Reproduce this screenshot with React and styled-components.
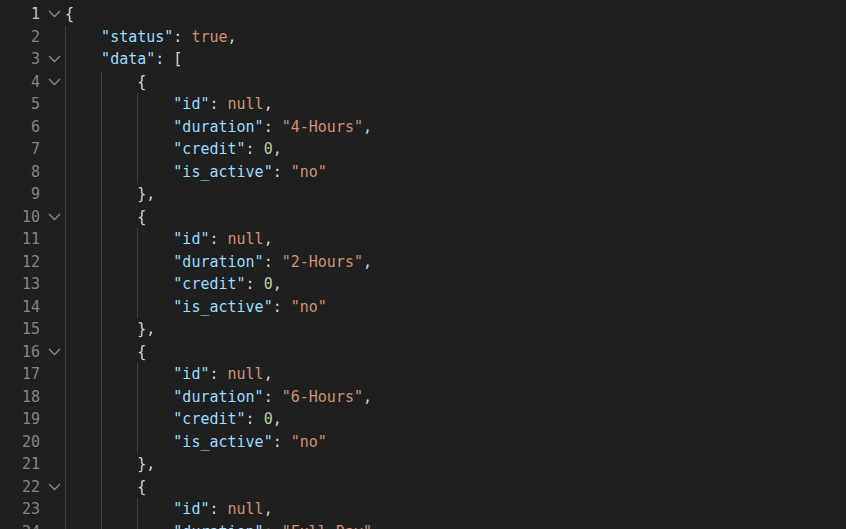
import styled, { createGlobalStyle } from 'styled-components';

const GlobalStyle = createGlobalStyle`
  html, body {
    margin: 0;
    background: #1f1f1f;
  }
`;

const Editor = styled.div`
  height: 100vh;
  overflow: hidden;
  padding-top: 3px;
  box-sizing: border-box;
  background: #1f1f1f;
  font-family: 'DejaVu Sans Mono', 'Liberation Mono', monospace;
  font-size: 15px;
`;

const Row = styled.div`
  display: flex;
  height: 22.5px;
  line-height: 22.5px;
`;

const LineNo = styled.div`
  width: 40px;
  flex-shrink: 0;
  text-align: right;
  color: ${(p) => (p.$active ? '#c6c6c6' : '#858585')};
`;

const Fold = styled.div`
  width: 25px;
  flex-shrink: 0;
  display: flex;
  align-items: center;
  padding-left: 8px;
  box-sizing: border-box;
`;

const Code = styled.div`
  display: flex;
  white-space: pre;
  color: #d4d4d4;
`;

const Indent = styled.span`
  display: inline-block;
  width: 4ch;
  height: 100%;
  box-sizing: border-box;
  border-left: 1px solid #404040;
`;

const colors = {
  key: '#9cdcfe',
  str: '#ce9178',
  kw: '#ce9178',
  num: '#b5cea8',
  punc: '#d4d4d4',
  brace: '#d4d4d4',
};

const Token = styled.span`
  color: ${(p) => colors[p.$kind]};
`;

const Chevron = () => (
  <svg width="13" height="8" viewBox="0 0 13 8">
    <polyline points="1,1 6.5,6.5 12,1" fill="none" stroke="#8b8b8b" strokeWidth="1.3" />
  </svg>
);

const prop = (indent, key, kind, value, comma = true) => ({
  indent,
  tokens: [
    ['key', `"${key}"`],
    ['punc', ': '],
    [kind, value],
    ...(comma ? [['punc', ',']] : []),
  ],
});

const item = (duration, last) => [
  { indent: 2, fold: true, tokens: [['brace', '{']] },
  prop(3, 'id', 'kw', 'null'),
  prop(3, 'duration', 'str', `"${duration}"`),
  prop(3, 'credit', 'num', '0'),
  prop(3, 'is_active', 'str', '"no"', false),
  { indent: 2, tokens: [['brace', '}'], ...(last ? [] : [['punc', ',']])] },
];

const lines = [
  { indent: 0, fold: true, tokens: [['brace', '{']] },
  prop(1, 'status', 'kw', 'true'),
  { indent: 1, fold: true, tokens: [['key', '"data"'], ['punc', ': '], ['brace', '[']] },
  ...item('4-Hours'),
  ...item('2-Hours'),
  ...item('6-Hours'),
  ...item('Full-Day'),
];

export default function App() {
  return (
    <>
      <GlobalStyle />
      <Editor>
        {lines.map((line, i) => (
          <Row key={i}>
            <LineNo $active={i === 0}>{i + 1}</LineNo>
            <Fold>{line.fold && <Chevron />}</Fold>
            <Code>
              {Array.from({ length: line.indent }).map((_, j) => (
                <Indent key={j} />
              ))}
              {line.tokens.map(([kind, text], j) => (
                <Token key={j} $kind={kind}>
                  {text}
                </Token>
              ))}
            </Code>
          </Row>
        ))}
      </Editor>
    </>
  );
}
